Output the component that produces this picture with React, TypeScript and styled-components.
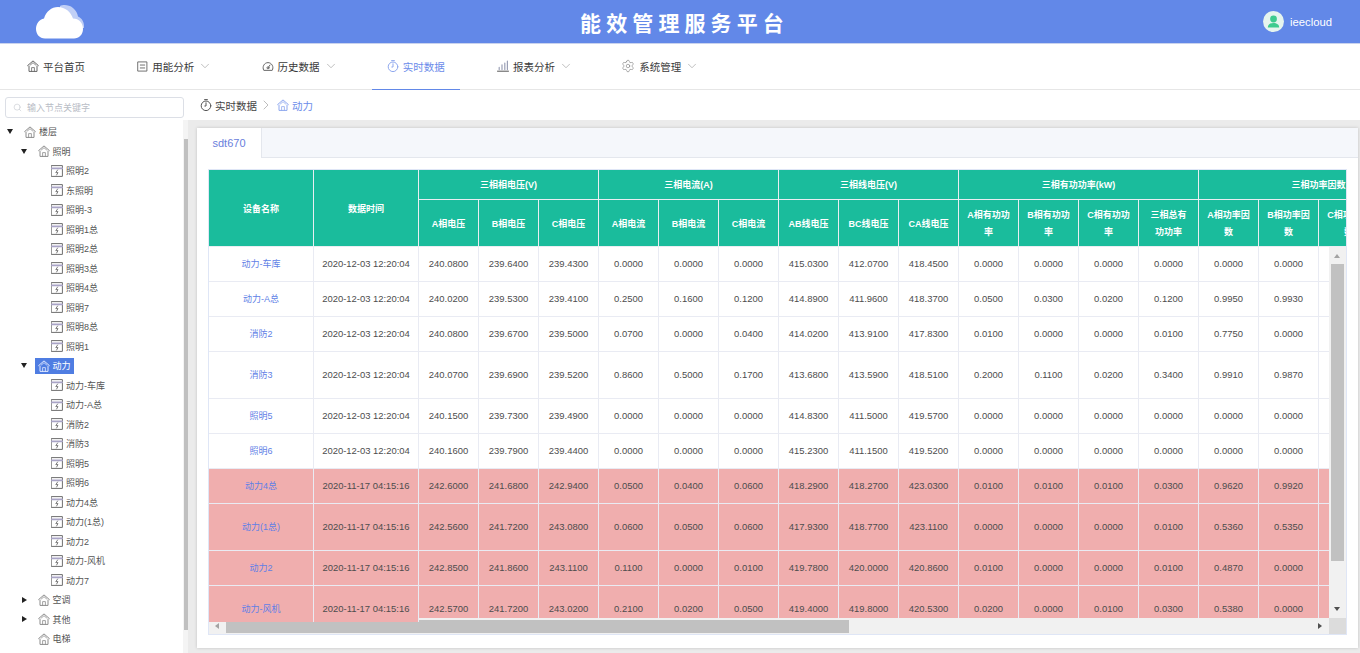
import React from "react";
import styled, { createGlobalStyle } from "styled-components";
import { ChevronDown, ChevronRight, Search, Settings } from "lucide-react";

const Global = createGlobalStyle`
  html, body { margin: 0; padding: 0; background: #fff; }
  body { font-family: "Liberation Sans", "Noto Sans CJK SC", sans-serif; }
  * { box-sizing: border-box; }
`;

const Page = styled.div`
  width: 1360px; height: 653px; overflow: hidden;
  display: flex; flex-direction: column; background: #fff;
`;
const Header = styled.header`
  height: 44px; flex: none; background: #6288e8; border-bottom: 1px solid #c9d3ee;
  display: grid; grid-template-columns: 1fr auto 1fr; align-items: center;
  padding: 0 28px 0 36px; color: #fff;
`;
const Logo = styled.svg`width: 50px; height: 36px; display: block; margin-top: -1px;`;
const Title = styled.h1`
  margin: 0; padding-left: 1px; font-size: 21px; line-height: 40px; font-weight: 700; letter-spacing: 5.1px;
  font-family: "Noto Sans CJK SC", sans-serif;
`;
const User = styled.div`
  justify-self: end; display: flex; align-items: center; gap: 6px; font-size: 11.3px;
`;
const Avatar = styled.svg`width: 21px; height: 21px; display: block;`;

const Nav = styled.nav`
  height: 46px; flex: none; border-bottom: 1px solid #e6e6e6;
  display: flex; gap: 22.25px; padding-left: 12px;
`;
const NavItem = styled.div<{ $active?: boolean }>`
  height: 46px; padding: 0 15px 1px; display: flex; align-items: center; gap: 4px;
  font-size: 10.5px; color: ${(p) => (p.$active ? "#6b8cea" : "#3a3a3a")};
  border-bottom: 1px solid ${(p) => (p.$active ? "#6288e8" : "transparent")};
  margin-bottom: -1px;
`;
const NavChevron = styled(ChevronDown)`
  width: 14px; height: 14px; margin-right: -3px; color: #a5a5a5; stroke-width: 1.2;
`;

const Body = styled.div`flex: 1; min-height: 0; display: flex;`;
const Sidebar = styled.aside`
  width: 188px; flex: none; position: relative; padding: 7px 0 0 5px; overflow: hidden;
`;
const SearchBox = styled.div`
  width: 179px; height: 21px; border: 1px solid #dcdfe6; border-radius: 3px;
  display: flex; align-items: center; gap: 5px; padding-left: 7px;
  font-size: 9px; color: #b9bdc6;
`;
const SearchIcon = styled(Search)`width: 9px; height: 9px; color: #bcc0c8; stroke-width: 1.4;`;
const Tree = styled.div`margin: 3.75px 0 0 -5px;`;
const TreeRow = styled.div<{ $level: number }>`
  height: 19.5px; display: flex; align-items: center;
  padding-left: ${(p) => 7 + p.$level * 13.5}px;
`;
const CaretSlot = styled.span`width: 14.5px; flex: none; display: flex; align-items: center;`;
const CaretDown = styled.i`
  width: 0; height: 0; border-left: 3.5px solid transparent; border-right: 3.5px solid transparent;
  border-top: 5px solid #222;
`;
const CaretRight = styled.i`
  width: 0; height: 0; margin-left: 1.5px; border-top: 3.5px solid transparent; border-bottom: 3.5px solid transparent;
  border-left: 5px solid #222;
`;
const TreeLabel = styled.span<{ $selected?: boolean }>`
  display: inline-flex; align-items: center; gap: 3px; height: 16px; padding: 0 3px 0 2.5px;
  font-size: 9px; white-space: nowrap;
  color: ${(p) => (p.$selected ? "#fff" : "#555")};
  background: ${(p) => (p.$selected ? "#4f7de2" : "transparent")};
`;
const SideTrack = styled.div`
  position: absolute; top: 30px; right: 0; bottom: 0; width: 5px; background: #f4f4f4;
`;
const SideThumb = styled.div`
  position: absolute; top: 49px; right: 0; width: 4px; height: 491px; background: #c0c0c0;
`;

const Main = styled.main`flex: 1; min-width: 0; display: flex; flex-direction: column;`;
const Crumbs = styled.div`
  height: 30px; flex: none; display: flex; align-items: center; padding: 0 0 0 12px;
  font-size: 10.5px; color: #444; gap: 3px;
`;
const CrumbSep = styled(ChevronRight)`width: 16px; height: 16px; margin-left: -2px; color: #9c9c9c; stroke-width: 1;`;
const CrumbCurrent = styled.span`color: #6b8cea;`;
const Panel = styled.div`
  flex: 1; min-height: 0; background: #ebebeb; padding: 8px 2px 5px 9px; display: flex;
`;
const Card = styled.section`
  flex: 1; min-width: 0; background: #fff; box-shadow: 0 0 3px rgba(0,0,0,.18);
  display: flex; flex-direction: column;
`;
const TabBar = styled.div`
  height: 30px; flex: none; background: #f5f7fb; border-bottom: 1px solid #e4e7ed; display: flex;
`;
const Tab = styled.div`
  width: 65px; height: 30px; background: #fff; border-right: 1px solid #e4e7ed;
  display: flex; align-items: center; justify-content: center;
  font-size: 11px; color: #6a80dc;
`;
const TabBody = styled.div`padding: 11px 11px 0;`;
const TableWrap = styled.div`
  height: 466px; border: 1px solid #dfe6f6; position: relative; overflow: hidden;
`;
const ScrollArea = styled.div`height: 448px; overflow: hidden;`;
const Frozen = styled.div`
  position: absolute; left: 0; top: 0; width: 210px; height: 451.5px; overflow: hidden; z-index: 2;
  background: #fff;
`;
const Table = styled.table<{ $width: number }>`
  width: ${(p) => p.$width}px; table-layout: fixed; border-collapse: separate; border-spacing: 0;
`;
const Col = styled.col<{ $w: number }>`width: ${(p) => p.$w}px;`;
const Th = styled.th<{ $h: number }>`
  height: ${(p) => p.$h}px; padding: 2px 7px 0; background: #1abc9c; color: #fff;
  border-right: 1px solid #e9eef2; border-bottom: 1px solid #e9eef2;
  font-size: 9px; line-height: 17px; font-weight: 700; text-align: center; white-space: pre-line;
  overflow: hidden;
`;
const GroupTitle = styled.span`white-space: nowrap;`;
const Td = styled.td<{ $alarm: boolean; $tall: boolean }>`
  height: ${(p) => (p.$tall ? 47 : 35)}px; padding: 0 0 2px; text-align: center;
  font-size: 9.45px; color: #4d4d4d; white-space: nowrap;
  background: ${(p) => (p.$alarm ? "#f0aeae" : "#fff")};
  border-right: 1px solid #e9ebf3; border-bottom: 1px solid #e9ebf3;
`;
const DeviceLink = styled.a`color: #5f7fe6; font-size: 9px; text-decoration: none;`;

const VTrack = styled.div`
  position: absolute; z-index: 1; right: 0; top: 77px; width: 17px; height: 371px; background: #f1f1f1;
`;
const VThumb = styled.div`
  position: absolute; left: 2px; top: 17px; width: 13px; height: 297px; background: #c1c1c1;
`;
const ArrowUp = styled.i`
  position: absolute; left: 5px; top: 7px; width: 0; height: 0;
  border-left: 3.5px solid transparent; border-right: 3.5px solid transparent; border-bottom: 4px solid #a3a3a3;
`;
const ArrowDown = styled.i`
  position: absolute; left: 5px; bottom: 7px; width: 0; height: 0;
  border-left: 3.5px solid transparent; border-right: 3.5px solid transparent; border-top: 4px solid #505050;
`;
const HBar = styled.div`height: 16px; background: #f1f1f1; position: relative;`;
const HThumb = styled.div`
  position: absolute; left: 17px; top: 2px; width: 623px; height: 13px; background: #c1c1c1;
`;
const ArrowLeft = styled.i`
  position: absolute; left: 6px; top: 5px; width: 0; height: 0;
  border-top: 3.5px solid transparent; border-bottom: 3.5px solid transparent; border-right: 4px solid #a3a3a3;
`;
const ArrowRight = styled.i`
  position: absolute; left: 1109px; top: 5px; width: 0; height: 0;
  border-top: 3.5px solid transparent; border-bottom: 3.5px solid transparent; border-left: 4px solid #505050;
`;
const Corner = styled.div`
  position: absolute; right: 0; top: 0; width: 17px; height: 16px; background: #dcdcdc;
`;

const Svg = styled.svg<{ $s?: number }>`
  width: ${(p) => p.$s ?? 12}px; height: ${(p) => p.$s ?? 12}px; flex: none; display: block;
  fill: none; stroke: currentColor; stroke-width: 1; stroke-linecap: round; stroke-linejoin: round;
`;
const IconTone = styled.span<{ $c: string }>`display: inline-flex; color: ${(p) => p.$c};`;
const Gear = styled(Settings)`width: 14px; height: 14px; margin-left: -1px; stroke-width: 1; color: #777;`;

const House = ({ c = "#8a8a8a" }: { c?: string }) => (
  <IconTone $c={c}>
    <Svg viewBox="0 0 12 12">
      <path d="M.6 5.6 6 .9l5.4 4.7M2 6v5.4h8V6" />
      <path d="M3.4 4.9 6 2.7l2.6 2.2M4.6 11.4V7.6h2.8v3.8" strokeWidth=".8" />
    </Svg>
  </IconTone>
);
const Device = () => (
  <IconTone $c="#6e6e6e">
    <Svg viewBox="0 0 12 12">
      <rect x=".6" y=".6" width="10.8" height="10.8" />
      <path d="M.8 3.4h10.4" stroke="#a9a4c6" strokeWidth="1.6" />
      <path d="M6.6 5 4.8 7.6h2.2L5.6 10" strokeWidth=".9" />
    </Svg>
  </IconTone>
);
const Stopwatch = ({ c }: { c: string }) => (
  <IconTone $c={c}>
    <Svg viewBox="0 0 12 12">
      <circle cx="6" cy="6.8" r="4.8" />
      <path d="M4.6.6h2.8M6 3.8v3.2H4.800" />
    </Svg>
  </IconTone>
);
const ListIcon = () => (
  <IconTone $c="#666">
    <Svg viewBox="0 0 12 12" $s={11}>
      <rect x="1.2" y="1" width="9.600" height="10" />
      <path d="M3.600 4.400h4.800M3.600 7.600h4.800" />
    </Svg>
  </IconTone>
);
const GaugeIcon = () => (
  <IconTone $c="#666">
    <Svg viewBox="0 0 12 12">
      <path d="M1.600 10A5 5 0 1 1 10.400 10Z" />
      <circle cx="6" cy="7.800" r="1" />
      <path d="M6.600 7 8 5" />
    </Svg>
  </IconTone>
);
const BarsIcon = () => (
  <IconTone $c="#a08c7a">
    <Svg viewBox="0 0 12 12">
      <path d="M.5 11.200h11" stroke="#555" />
      <path d="M2.200 9.600V7.400M5 9.600V4.800M7.800 9.600V3M10.400 9.600V1.200" strokeWidth="1.200" stroke="#9a9fb5" />
    </Svg>
  </IconTone>
);

type TreeNode = { label: string; level: number; caret?: "down" | "right"; leaf?: boolean; selected?: boolean };
const lights = ["照明2", "东照明", "照明-3", "照明1总", "照明2总", "照明3总", "照明4总", "照明7", "照明8总", "照明1"];
const power = ["动力-车库", "动力-A总", "消防2", "消防3", "照明5", "照明6", "动力4总", "动力(1总)", "动力2", "动力-风机", "动力7"];
const tree: TreeNode[] = [
  { label: "楼层", level: 0, caret: "down" },
  { label: "照明", level: 1, caret: "down" },
  ...lights.map((label) => ({ label, level: 2, leaf: true })),
  { label: "动力", level: 1, caret: "down", selected: true },
  ...power.map((label) => ({ label, level: 2, leaf: true })),
  { label: "空调", level: 1, caret: "right" },
  { label: "其他", level: 1, caret: "right" },
  { label: "电梯", level: 1 },
];

const navItems = [
  { label: "平台首页", icon: <House c="#666" /> },
  { label: "用能分析", icon: <ListIcon />, more: true },
  { label: "历史数据", icon: <GaugeIcon />, more: true },
  { label: "实时数据", icon: <Stopwatch c="#8fa8ee" />, active: true },
  { label: "报表分析", icon: <BarsIcon />, more: true },
  { label: "系统管理", icon: <Gear />, more: true },
];

const groups = [
  { title: "三相相电压(V)", cols: ["A相电压", "B相电压", "C相电压"] },
  { title: "三相电流(A)", cols: ["A相电流", "B相电流", "C相电流"] },
  { title: "三相线电压(V)", cols: ["AB线电压", "BC线电压", "CA线电压"] },
  { title: "三相有功功率(kW)", cols: ["A相有功功\n率", "B相有功功\n率", "C相有功功\n率", "三相总有\n功功率"] },
  { title: "三相功率因数", cols: ["A相功率因\n数", "B相功率因\n数", "C相功率因\n数", ""] },
];

const t1 = "2020-12-03 12:20:04";
const t2 = "2020-11-17 04:15:16";
const z = "0.0000";
const rows = [
  { name: "动力-车库", time: t1, tall: false, alarm: false, v: ["240.0800", "239.6400", "239.4300", z, z, z, "415.0300", "412.0700", "418.4500", z, z, z, z, z, z] },
  { name: "动力-A总", time: t1, tall: false, alarm: false, v: ["240.0200", "239.5300", "239.4100", "0.2500", "0.1600", "0.1200", "414.8900", "411.9600", "418.3700", "0.0500", "0.0300", "0.0200", "0.1200", "0.9950", "0.9930"] },
  { name: "消防2", time: t1, tall: false, alarm: false, v: ["240.0800", "239.6700", "239.5000", "0.0700", z, "0.0400", "414.0200", "413.9100", "417.8300", "0.0100", z, z, "0.0100", "0.7750", z] },
  { name: "消防3", time: t1, tall: true, alarm: false, v: ["240.0700", "239.6900", "239.5200", "0.8600", "0.5000", "0.1700", "413.6800", "413.5900", "418.5100", "0.2000", "0.1100", "0.0200", "0.3400", "0.9910", "0.9870"] },
  { name: "照明5", time: t1, tall: false, alarm: false, v: ["240.1500", "239.7300", "239.4900", z, z, z, "414.8300", "411.5000", "419.5700", z, z, z, z, z, z] },
  { name: "照明6", time: t1, tall: false, alarm: false, v: ["240.1600", "239.7900", "239.4400", z, z, z, "415.2300", "411.1500", "419.5200", z, z, z, z, z, z] },
  { name: "动力4总", time: t2, tall: false, alarm: true, v: ["242.6000", "241.6800", "242.9400", "0.0500", "0.0400", "0.0600", "418.2900", "418.2700", "423.0300", "0.0100", "0.0100", "0.0100", "0.0300", "0.9620", "0.9920"] },
  { name: "动力(1总)", time: t2, tall: true, alarm: true, v: ["242.5600", "241.7200", "243.0800", "0.0600", "0.0500", "0.0600", "417.9300", "418.7700", "423.1100", z, z, z, "0.0100", "0.5360", "0.5350"] },
  { name: "动力2", time: t2, tall: false, alarm: true, v: ["242.8500", "241.8600", "243.1100", "0.1100", z, "0.0100", "419.7800", "420.0000", "420.8600", "0.0100", z, z, "0.0100", "0.4870", z] },
  { name: "动力-风机", time: t2, tall: true, alarm: true, v: ["242.5700", "241.7200", "243.0200", "0.2100", "0.0200", "0.0500", "419.4000", "419.8000", "420.5300", "0.0200", z, "0.0100", "0.0300", "0.5380", z] },
];

export default function App() {
  return (
    <Page>
      <Global />
      <Header>
        <Logo viewBox="0 0 50 36">
          <path d="M24 3C27 1.500 33 1.500 37 5C40 7.500 41.500 10.500 42 13.500C46 15 48.500 19.500 48 25H40L24 10Z" fill="#fff" fillOpacity=".6" />
          <path d="M9 35.500C3.500 35.500 0 31 0 26C0 20.500 3.500 16.500 8 15.500C10 8.500 15.500 4 22 4C29 4 35 9 37 15.500C43 15.500 47 20 47 26C47 31.500 43 35.500 38 35.500Z" fill="#fff" />
        </Logo>
        <Title>能效管理服务平台</Title>
        <User>
          <Avatar viewBox="0 0 21 21">
            <circle cx="10.500" cy="10.500" r="10.500" fill="#e6f4ee" />
            <circle cx="10.500" cy="8" r="3.400" fill="#3ecb8f" />
            <path d="M4.800 16.500c0-3 2.500-4.500 5.700-4.500s5.700 1.500 5.700 4.500z" fill="#3ecb8f" />
          </Avatar>
          ieecloud
        </User>
      </Header>

      <Nav>
        {navItems.map((n) => (
          <NavItem key={n.label} $active={n.active}>
            {n.icon}
            {n.label}
            {n.more && <NavChevron />}
          </NavItem>
        ))}
      </Nav>

      <Body>
        <Sidebar>
          <SearchBox>
            <SearchIcon />
            输入节点关键字
          </SearchBox>
          <Tree>
            {tree.map((n, i) => (
              <TreeRow key={i} $level={n.level}>
                <CaretSlot>
                  {n.caret === "down" && <CaretDown />}
                  {n.caret === "right" && <CaretRight />}
                </CaretSlot>
                <TreeLabel $selected={n.selected}>
                  {n.leaf ? <Device /> : <House c={n.selected ? "#dfe8ff" : "#8c8c8c"} />}
                  {n.label}
                </TreeLabel>
              </TreeRow>
            ))}
          </Tree>
          <SideTrack />
          <SideThumb />
        </Sidebar>

        <Main>
          <Crumbs>
            <Stopwatch c="#555" />
            实时数据
            <CrumbSep />
            <House c="#8fa8ee" />
            <CrumbCurrent>动力</CrumbCurrent>
          </Crumbs>
          <Panel>
            <Card>
              <TabBar>
                <Tab>sdt670</Tab>
              </TabBar>
              <TabBody>
                <TableWrap>
                  <ScrollArea>
                    <Table $width={1230}>
                      <colgroup>
                        <Col $w={105} />
                        <Col $w={105} />
                        {Array.from({ length: 17 }).map((_, i) => (
                          <Col key={i} $w={60} />
                        ))}
                      </colgroup>
                      <thead>
                        <tr>
                          <Th $h={30} rowSpan={2} />
                          <Th $h={30} rowSpan={2} />
                          {groups.map((g) => (
                            <Th $h={30} key={g.title} colSpan={g.cols.length}>
                              <GroupTitle>{g.title}</GroupTitle>
                            </Th>
                          ))}
                        </tr>
                        <tr>
                          {groups.flatMap((g) =>
                            g.cols.map((c, i) => (
                              <Th $h={47} key={g.title + i}>
                                {c}
                              </Th>
                            ))
                          )}
                        </tr>
                      </thead>
                      <tbody>
                        {rows.map((r) => (
                          <tr key={r.name}>
                            <Td $alarm={r.alarm} $tall={r.tall} />
                            <Td $alarm={r.alarm} $tall={r.tall} />
                            {r.v.map((x, i) => (
                              <Td key={i} $alarm={r.alarm} $tall={r.tall}>
                                {x}
                              </Td>
                            ))}
                            <Td $alarm={r.alarm} $tall={r.tall} />
                            <Td $alarm={r.alarm} $tall={r.tall} />
                          </tr>
                        ))}
                      </tbody>
                    </Table>
                  </ScrollArea>
                  <Frozen>
                    <Table $width={210}>
                      <colgroup>
                        <Col $w={105} />
                        <Col $w={105} />
                      </colgroup>
                      <thead>
                        <tr>
                          <Th $h={77}>设备名称</Th>
                          <Th $h={77}>数据时间</Th>
                        </tr>
                      </thead>
                      <tbody>
                        {rows.map((r) => (
                          <tr key={r.name}>
                            <Td $alarm={r.alarm} $tall={r.tall}>
                              <DeviceLink>{r.name}</DeviceLink>
                            </Td>
                            <Td $alarm={r.alarm} $tall={r.tall}>
                              {r.time}
                            </Td>
                          </tr>
                        ))}
                      </tbody>
                    </Table>
                  </Frozen>
                  <VTrack>
                    <ArrowUp />
                    <VThumb />
                    <ArrowDown />
                  </VTrack>
                  <HBar>
                    <ArrowLeft />
                    <HThumb />
                    <ArrowRight />
                    <Corner />
                  </HBar>
                </TableWrap>
              </TabBody>
            </Card>
          </Panel>
        </Main>
      </Body>
    </Page>
  );
}
